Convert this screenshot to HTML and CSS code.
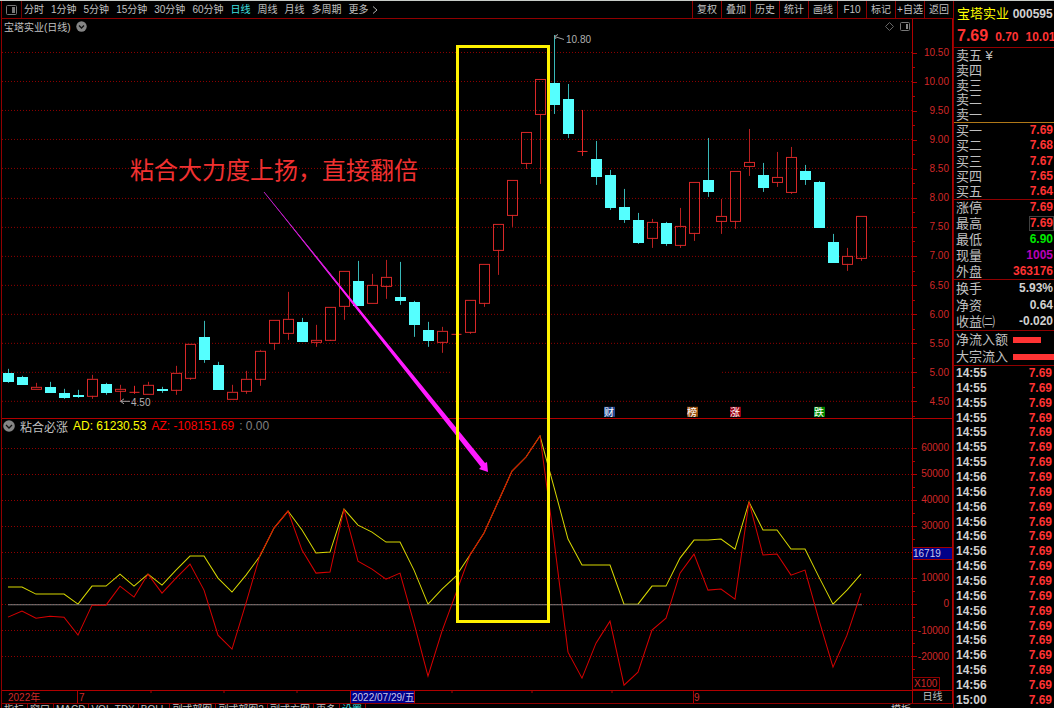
FILE: index.html
```html
<!DOCTYPE html>
<html lang="zh-CN">
<head>
<meta charset="utf-8">
<title>宝塔实业 000595</title>
<link rel="stylesheet" href="styles.css">
</head>
<body>
<div class="app">
  <main class="main">
    <nav class="toolbar">
      <button class="layout-btn" aria-label="布局"><svg width="11" height="10" viewBox="0 0 11 10"><rect x="0.5" y="0.5" width="10" height="9" rx="1" fill="none" stroke="#777"/><rect x="6" y="2" width="3" height="6" fill="#777"/></svg></button>
      <div class="periods">
        <button>分时</button><button>1分钟</button><button>5分钟</button><button>15分钟</button><button>30分钟</button><button>60分钟</button><button class="active">日线</button><button>周线</button><button>月线</button><button>多周期</button><button class="more">更多<svg width="6" height="8" viewBox="0 0 6 8"><path d="M1 0.5 L5 4 L1 7.5" fill="none" stroke="#b0b0b0"/></svg></button>
      </div>
      <div class="tools">
        <button>复权</button><button>叠加</button><button>历史</button><button>统计</button><button>画线</button><button>F10</button><button>标记</button><button>+自选</button><button>返回</button>
      </div>
    </nav>

    <div class="charts">
      <section class="panel price">
        <div class="plot">
          <svg id="price" viewBox="2 19 910 399" preserveAspectRatio="none"></svg>
          <header class="caption">
            <span>宝塔实业(日线)</span>
            <svg width="11" height="11" viewBox="0 0 11 11"><circle cx="5.5" cy="5.5" r="5.2" fill="#858585"/><path d="M3 4.5 L5.5 7 L8 4.5" fill="none" stroke="#111" stroke-width="1.3"/></svg>
            <span class="corner">
              <svg width="9" height="9" viewBox="0 0 9 9"><path d="M4.5 0.5 L8.5 4.5 L4.5 8.5 L0.5 4.5 Z" fill="none" stroke="#666"/></svg>
              <svg width="10" height="9" viewBox="0 0 10 9"><rect x="0.5" y="0.5" width="9" height="8" rx="1" fill="none" stroke="#777"/><rect x="6" y="2" width="2" height="5" fill="#888"/></svg>
            </span>
          </header>
        </div>
        <div class="axis">
          <span>10.50</span><span>10.00</span><span>9.50</span><span>9.00</span><span>8.50</span><span>8.00</span><span>7.50</span><span>7.00</span><span>6.50</span><span>6.00</span><span>5.50</span><span>5.00</span><span>4.50</span>
        </div>
      </section>

      <section class="panel indicator">
        <div class="plot">
          <svg id="indicator" viewBox="2 419 910 271" preserveAspectRatio="none"></svg>
          <header class="caption">
            <svg width="12" height="12" viewBox="0 0 12 12"><circle cx="6" cy="6" r="5.8" fill="#858585"/><path d="M3 5 L6 8 L9 5" fill="none" stroke="#111" stroke-width="1.3"/></svg>
            <span>粘合必涨</span><span class="ad">AD: 61230.53</span><span class="az">AZ: -108151.69</span><span class="zero">: 0.00</span>
          </header>
        </div>
        <div class="axis">
          <span>60000</span><span>50000</span><span>40000</span><span>30000</span><span class="cursor">16719</span><span>10000</span><span>0</span><span>-10000</span><span>-20000</span>
          <b class="scale">X100</b>
        </div>
      </section>

      <svg class="notes" viewBox="2 19 951 672" preserveAspectRatio="none">
        <path d="M264 192 L485 463 L487 462 L488 472 L479 469 L481 467 Z" fill="#ff1aff"/>
        <path d="M264 192 L340 286" stroke="#c020c8" fill="none"/>
        <rect x="457.500" y="46.500" width="91" height="575" fill="none" stroke="#fff200" stroke-width="3"/>
        <text x="130" y="179" class="note">粘合大力度上扬，直接翻倍</text>
      </svg>
    </div>

    <footer class="dates">
      <svg viewBox="2 691 910 12" preserveAspectRatio="none">
        <path d="M77.500 691V703 M693.500 691V703 M151 691v2 M224 691v2 M297 691v2 M452 691v2 M532 691v2 M612 691v2" stroke="#b00000"/>
        <rect x="350" y="691" width="65" height="12" fill="#000088"/>
        <path d="M350.500 691V703 M414.500 691V703" stroke="#b00000"/>
        <text x="8" y="701">2022年</text><text x="79" y="701">7</text><text x="352" y="701" class="picked">2022/07/29/五</text><text x="694" y="701">9</text>
      </svg>
      <span>日线</span>
    </footer>

    <div class="tabs">
      <button>指标</button><button>窗口</button><button>MACD</button><button>VOL-TDX</button><button>BOLL</button><button>副式部图</button><button>副式部图2</button><button>副式方图</button><button>更多</button><button class="active">设置</button><span class="template">模板</span>
    </div>
  </main>

  <aside class="side">
    <header class="quote">
      <h1>宝塔实业 <b>000595</b></h1>
      <p><strong>7.69</strong><b>0.70</b><b>10.01</b></p>
    </header>
    <dl class="sells"><div><dt>卖五 ¥</dt></div><div><dt>卖四</dt></div><div><dt>卖三</dt></div><div><dt>卖二</dt></div><div><dt>卖一</dt></div></dl>
    <dl class="buys"><div><dt>买一</dt><dd>7.69</dd></div><div><dt>买二</dt><dd>7.68</dd></div><div><dt>买三</dt><dd>7.67</dd></div><div><dt>买四</dt><dd>7.65</dd></div><div><dt>买五</dt><dd>7.64</dd></div></dl>
    <dl class="stats"><div><dt>涨停</dt><dd>7.69</dd></div><div><dt>最高</dt><dd class="boxed">7.69</dd></div><div><dt>最低</dt><dd class="green">6.90</dd></div><div><dt>现量</dt><dd class="purple">1005</dd></div><div><dt>外盘</dt><dd>363176</dd></div></dl>
    <dl class="ratios"><div><dt>换手</dt><dd>5.93%</dd></div><div><dt>净资</dt><dd>0.64</dd></div><div><dt>收益㈡</dt><dd>-0.020</dd></div></dl>
    <dl class="flows"><div><dt>净流入额</dt><dd><i class="bar short"></i></dd></div><div><dt>大宗流入</dt><dd><i class="bar"></i></dd></div></dl>
    <table class="ticks"><tbody id="ticks"></tbody></table>
  </aside>
</div>
<script src="app.js"></script>
</body>
</html>
```
FILE: styles.css
```css
* { box-sizing: border-box; }
body { margin: 0; background: #000; color: #c0c0c0; font-family: "Liberation Sans", "Noto Sans CJK SC", sans-serif; font-size: 12px; }
button { margin: 0; padding: 0; border: 0; background: none; color: inherit; font: inherit; white-space: nowrap; }
svg { display: block; }
dl, dd, p, h1 { margin: 0; }
.app { display: flex; height: 100vh; overflow: hidden; border-top: 1px solid #c8ccc8; }
.main { flex: 1; min-width: 0; display: flex; flex-direction: column; border-left: 1px solid #900000; margin-left: 1px; }

.toolbar { display: flex; flex: none; height: 18px; border-bottom: 1px solid #900000; font-size: 10px; line-height: 17px; }
.layout-btn { width: 20px; padding-left: 4px; border-right: 1px solid #700000; }
.periods { display: flex; flex: 1; gap: 7px; padding-left: 2px; }
.active { color: #3fe0e0; }
.more { display: flex; align-items: center; gap: 3px; }
.tools { display: flex; }
.tools button { width: 29px; border-left: 1px solid #900000; }

.charts { position: relative; flex: 1; min-height: 0; display: flex; flex-direction: column; }
.panel { display: flex; min-height: 0; border-bottom: 1px solid #b00000; }
.price { flex: 400; }
.indicator { flex: 272; }
.plot { position: relative; flex: 1; min-width: 0; }
.plot > svg { position: absolute; inset: 0; width: 100%; height: 100%; }
.crisp { shape-rendering: crispEdges; }
.caption { position: relative; display: flex; align-items: center; gap: 5px; height: 15px; padding: 0 2px; font-size: 10px; }
.indicator .caption { padding: 0 1px; font-size: 12px; }
.corner { display: flex; gap: 6px; margin-left: auto; }
.ad { color: #ffff00; }
.az { color: #ff0000; }
.zero { color: #808080; }
.axis { position: relative; flex: none; display: flex; flex-direction: column; width: 41px; padding: 19px 0 2px; border-left: 1px solid #b00000; border-right: 1px solid #b00000; color: #d02828; font-size: 10px; }
.indicator .axis { padding: 16px 0 21px; }
.axis span { position: relative; flex: 1; display: flex; align-items: center; justify-content: flex-end; padding-right: 3px; }
.axis span::before, .axis span::after { content: ""; position: absolute; left: 0; top: 50%; width: 4px; height: 1px; background: #b00000; }
.axis span::after { top: 100%; width: 2px; }
.axis .cursor { flex: none; height: 13px; margin: 8px 0 5px; justify-content: flex-start; background: #000088; border: solid #a00000; border-width: 1px 0; color: #c8c8e8; }
.axis .cursor::before, .axis .cursor::after { display: none; }
.scale { position: absolute; left: 0; bottom: 0; padding: 0 2px 0 1px; border: 1px solid #900000; border-left: 0; font-weight: 400; line-height: 11px; }
.notes { position: absolute; inset: 0; width: 100%; height: 100%; pointer-events: none; }
.note { fill: #f03030; font-size: 24px; }
.chart-label { fill: #b0b0b0; font-size: 10px; }
.badge { fill: #fff; font-size: 10px; text-anchor: middle; }

.dates { display: flex; flex: none; height: 13px; border-bottom: 1px solid #900000; }
.dates svg { flex: 1; min-width: 0; height: 12px; }
.dates text { fill: #d02828; font-size: 10px; }
.dates .picked { fill: #c8c8e8; }
.dates span { width: 41px; border-left: 1px solid #b00000; border-right: 1px solid #b00000; text-align: center; font-size: 10px; line-height: 12px; }
.tabs { display: flex; flex: none; height: 4px; overflow: hidden; font-size: 10px; line-height: 12px; }
.tabs button { height: 12px; padding: 0 3px 0 2px; border-right: 1px solid #900000; }
.template { margin-left: auto; padding-right: 42px; }

.side { flex: none; width: 101px; display: flex; flex-direction: column; border-left: 1px solid #900000; overflow: hidden; }
.quote { flex: none; height: 47px; padding-left: 3px; border-bottom: 1px solid #900000; white-space: nowrap; }
.quote h1 { color: #ffff00; font-size: 13px; font-weight: 400; line-height: 26px; }
.quote h1 b { color: #d0d0d0; font-size: 12px; }
.quote p { display: flex; align-items: baseline; gap: 7px; color: #ff3333; line-height: 18px; }
.quote strong { font-size: 16px; }
.side dl { flex: none; display: flex; flex-direction: column; border-bottom: 1px solid #900000; }
.side dl div { flex: 1; min-height: 0; display: flex; align-items: center; justify-content: space-between; padding: 0 1px 0 2px; }
.side dt { font-size: 13px; line-height: 15px; white-space: nowrap; }
.side dd { color: #ff3333; font-weight: 700; line-height: 13px; }
.side .sells { height: 75px; border-color: #b07818; }
.buys { height: 77px; }
.stats { height: 80px; }
.ratios { height: 51px; }
.flows { height: 35px; }
.side .flows div { padding-right: 0; }
.side .ratios dd { color: #d0d0d0; }
.side .green { color: #00e800; }
.side .purple { color: #b800b8; }
.boxed { outline: 1px solid #404040; }
.bar { display: block; width: 41px; height: 6px; background: #ff3333; }
.short { width: 28px; margin-right: 13px; }
.ticks { flex: 1; width: 100%; min-height: 0; border-collapse: collapse; }
.ticks td { padding: 0 0 0 2px; color: #d0d0d0; font-weight: 700; line-height: 13px; }
.ticks td + td { text-align: right; padding: 0 2px 0 0; color: #ff3333; }
```
FILE: app.js
```js
const x = i => 8 + Math.round(i * 13.99);

// high, body top, body bottom, low, direction (d = down, u = up)
const candles = `369 373 382 383 d|376 377 385 385 d|383 387 389 389 u|382 387 393 393 d|389 393 398 399 d|390 395 397 398 d|375 379 396 399 u|383 384 393 395 d|385 389 391 401 u|386 392 392 394 u|382 385 394 394 u|387 389 391 393 d|366 373 390 395 u|344 344 378 380 u|321 337 360 363 d|362 365 390 390 d|385 392 399 399 u|371 379 391 394 u|350 351 379 386 u|320 320 343 350 u|292 319 333 340 u|318 322 342 342 d|325 340 342 347 u|307 307 340 341 u|271 271 306 320 u|261 281 306 306 d|274 285 303 303 u|260 277 286 299 u|262 297 301 305 d|301 302 325 337 d|322 330 341 347 d|327 331 342 353 u|325 334 334 341 u|300 300 332 334 u|264 264 303 307 u|224 224 250 275 u|180 180 215 227 u|132 132 163 169 u|79 79 114 184 u|35 83 105 114 d|84 99 134 138 d|110 151 151 156 u|141 159 177 185 d|170 175 208 210 d|189 207 220 223 d|213 220 243 244 d|219 222 238 248 u|222 223 244 246 d|208 226 245 248 u|182 182 233 241 u|138 180 192 197 d|199 216 221 234 u|171 171 221 229 u|129 162 166 176 u|163 175 188 192 d|152 177 182 187 u|147 157 192 194 u|165 171 180 185 d|181 182 228 228 d|234 242 263 263 d|248 256 264 271 u|216 216 258 261 u`
  .split("|").map(s => s.split(" "));

const ad = [587,587,594,594,594,604,586,586,574,586,574,585,570,556,556,578,592,575,556,528,511,530,553,552,509,525,532,542,542,570,604,589,576,555,533,502,471,457,436,487,539,565,565,565,604,604,586,586,558,540,540,539,549,502,530,530,549,549,577,604,590,574];
const az = [617,611,618,616,617,635,605,605,586,597,574,593,578,564,590,635,649,603,555,528,511,550,573,572,509,561,569,579,573,623,676,631,593,555,533,502,471,457,436,540,652,678,643,621,685,672,630,618,573,554,590,589,599,502,555,554,575,570,620,667,635,593];

const grid = (y, from = 2, to = 912) =>
  `<path d="M${from} ${y + 0.5}H${to}" stroke="#900000" stroke-dasharray="1 2"/>`;

let price = `<g class="crisp">`;
for (let k = 0; k < 13; k++) {
  const y = 52 + Math.round(k * 29.1);
  price += k === 11 ? grid(y, 2, 450) + grid(y, 722) : grid(y);
}
candles.forEach(([h, t, b, l, dir], i) => {
  const c = x(i) + 0.5;
  if (dir === "d") {
    price += `<path d="M${c} ${h}V${l}" stroke="#38b8b8"/><rect x="${c - 5.5}" y="${t}" width="11" height="${b - t}" fill="#55ffff"/>`;
  } else if (t === b) {
    price += `<path d="M${c} ${h}V${l} M${c - 5} ${+t + 0.5}h10" stroke="#e82828"/>`;
  } else {
    price += `<path d="M${c} ${h}V${t} M${c} ${b}V${l}" stroke="#b82020"/><rect x="${c - 5}" y="${+t + 0.5}" width="10" height="${b - t}" fill="none" stroke="#d82828"/>`;
  }
});
price += `</g>`;
[[604, "财", "#204890"], [687, "榜", "#985010"], [730, "涨", "#980010"], [814, "跌", "#008800"]].forEach(([left, label, color]) => {
  price += `<rect x="${left}" y="407" width="11" height="10" fill="${color}"/><text class="badge" x="${left + 5}" y="416">${label}</text>`;
});
price += `<path d="M130 401.500H120.500 M124 399L120.500 401.500L124 404 M564 39.500L554.500 36.500 M558 34.500L554.500 36.500L556 39" fill="none" stroke="#a0a0a0"/>
<text class="chart-label" x="131" y="406">4.50</text><text class="chart-label" x="566" y="43">10.80</text>`;
document.getElementById("price").innerHTML = price;

const line = (values, color) =>
  `<polyline points="${values.map((y, i) => `${x(i)},${y}`).join(" ")}" fill="none" stroke="${color}"/>`;
let ind = `<g class="crisp">`;
for (let k = 0; k < 9; k++) ind += grid(448 + k * 26);
ind += `</g>` + line(ad, "#d8d800") + `<path d="M8 604.500H862" stroke="#808080"/>` + line(az, "#d80000");
document.getElementById("indicator").innerHTML = ind;

const times = [...Array(7).fill("14:55"), ...Array(15).fill("14:56"), "15:00"];
document.getElementById("ticks").innerHTML = times.map(t => `<tr><td>${t}</td><td>7.69</td></tr>`).join("");
```
